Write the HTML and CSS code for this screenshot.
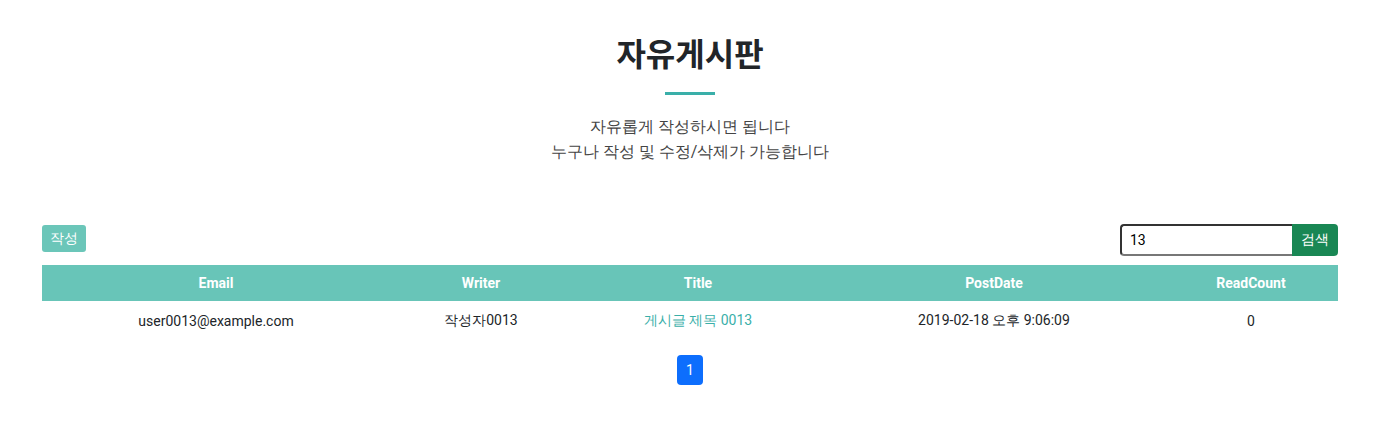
FILE: index.html
```html
<!DOCTYPE html>
<html lang="ko">
<head>
<meta charset="utf-8">
<title>자유게시판</title>
<link rel="stylesheet" href="styles.css">
</head>
<body>
<div class="container">
  <header class="intro">
    <h1 class="title">자유게시판</h1>
    <div class="divider"></div>
    <p class="desc">자유롭게 작성하시면 됩니다<br>누구나 작성 및 수정/삭제가 가능합니다</p>
  </header>
  <div class="toolbar">
    <button class="btn-write">작성</button>
    <form class="search">
      <input class="search-input" type="text" value="13">
      <button class="btn-search" type="button">검색</button>
    </form>
  </div>
  <table class="board">
    <colgroup>
      <col class="c-email"><col class="c-writer"><col class="c-title"><col class="c-date"><col class="c-count">
    </colgroup>
    <thead>
      <tr><th>Email</th><th>Writer</th><th>Title</th><th>PostDate</th><th>ReadCount</th></tr>
    </thead>
    <tbody>
      <tr>
        <td>user0013@example.com</td>
        <td>작성자0013</td>
        <td><a class="post-link" href="#">게시글 제목 0013</a></td>
        <td>2019-02-18 오후 9:06:09</td>
        <td>0</td>
      </tr>
    </tbody>
  </table>
  <nav class="pager">
    <a class="page active" href="#">1</a>
  </nav>
</div>
</body>
</html>
```
FILE: styles.css
```css
* { box-sizing: border-box; }
html, body { margin: 0; padding: 0; background: #fff; }
body {
  font-family: Roboto, sans-serif;
  color: #212529;
  font-size: 14px;
}
.container {
  width: 1296px;
  margin: 0 0 0 42px;
  padding-top: 32px;
}
.intro {
  display: flex;
  flex-direction: column;
  align-items: center;
}
.title {
  margin: 0;
  font-family: Roboto, "Noto Sans CJK KR", sans-serif;
  font-size: 32px;
  font-weight: 700;
  line-height: 46px;
  color: #212529;
}
.divider {
  width: 50px;
  height: 3px;
  background: #3aafa9;
  margin-top: 14px;
}
.desc {
  margin: 19px 0 0;
  text-align: center;
  font-size: 16px;
  line-height: 25px;
  color: #444;
}
.toolbar {
  display: flex;
  justify-content: space-between;
  align-items: flex-start;
  margin-top: 60px;
  height: 41px;
}
.btn-write {
  margin-top: 1px;
  height: 27px;
  padding: 0 8px;
  border: none;
  border-radius: 3px;
  background: #6bc6b9;
  color: #fff;
  font-family: inherit;
  font-size: 14px;
}
.search { display: flex; }
.search-input {
  width: 172px;
  height: 32px;
  border: 2px solid #333;
  border-right: none;
  border-bottom-color: #777;
  border-radius: 4px 0 0 4px;
  padding: 0 8px;
  font-family: inherit;
  font-size: 14px;
  color: #000;
  outline: none;
}
.btn-search {
  width: 46px;
  height: 32px;
  border: none;
  border-radius: 0 4px 4px 0;
  background: #198754;
  color: #fff;
  font-family: inherit;
  font-size: 14px;
  padding: 0;
}
.board {
  width: 100%;
  border-collapse: collapse;
  table-layout: fixed;
}
.c-email { width: 348px; }
.c-writer { width: 182px; }
.c-title { width: 252px; }
.c-date { width: 340px; }
.c-count { width: 174px; }
.board th {
  background: #68c5b8;
  color: #fff;
  font-weight: 700;
  height: 36px;
  padding: 0;
  text-align: center;
  font-size: 14px;
}
.board td {
  height: 39px;
  padding: 0;
  text-align: center;
  font-size: 14px;
  color: #212529;
}
.post-link {
  color: #3aafa9;
  text-decoration: none;
}
.pager {
  display: flex;
  justify-content: center;
  margin-top: 15px;
}
.page {
  display: flex;
  align-items: center;
  justify-content: center;
  width: 26px;
  height: 30px;
  border-radius: 4px;
  background: #0d6efd;
  color: #fff;
  text-decoration: none;
  font-size: 14px;
}
```
